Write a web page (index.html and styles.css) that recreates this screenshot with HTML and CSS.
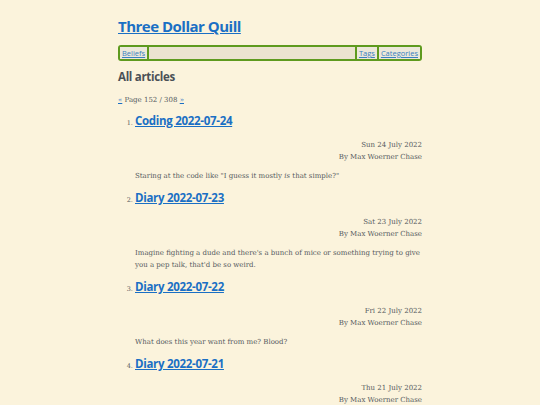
FILE: index.html
```html
<!DOCTYPE html>
<html>
<head>
<meta charset="utf-8">
<link rel="stylesheet" href="styles.css">
<title>Three Dollar Quill</title>
</head>
<body>
<div class="page">
  <h1 class="site-title"><a href="#">Three Dollar Quill</a></h1>
  <nav class="nav">
    <a class="nav-link nav-left" href="#">Beliefs</a>
    <span class="nav-fill"></span>
    <a class="nav-link nav-right" href="#">Tags</a>
    <a class="nav-link nav-right" href="#">Categories</a>
  </nav>
  <h2 class="section-title">All articles</h2>
  <p class="pager"><a href="#">«</a> Page 152 / 308 <a href="#">»</a></p>
  <ol class="articles">
    <li class="article">
      <h3 class="article-title"><a href="#">Coding 2022-07-24</a></h3>
      <div class="meta"><div>Sun 24 July 2022</div><div>By Max Woerner Chase</div></div>
      <p class="summary">Staring at the code like "I guess it mostly <em>is</em> that simple?"</p>
    </li>
    <li class="article">
      <h3 class="article-title"><a href="#">Diary 2022-07-23</a></h3>
      <div class="meta"><div>Sat 23 July 2022</div><div>By Max Woerner Chase</div></div>
      <p class="summary">Imagine fighting a dude and there's a bunch of mice or something trying to give you a pep talk, that'd be so weird.</p>
    </li>
    <li class="article">
      <h3 class="article-title"><a href="#">Diary 2022-07-22</a></h3>
      <div class="meta"><div>Fri 22 July 2022</div><div>By Max Woerner Chase</div></div>
      <p class="summary">What does this year want from me? Blood?</p>
    </li>
    <li class="article">
      <h3 class="article-title"><a href="#">Diary 2022-07-21</a></h3>
      <div class="meta"><div>Thu 21 July 2022</div><div>By Max Woerner Chase</div></div>
    </li>
  </ol>
</div>
</body>
</html>
```
FILE: styles.css
```css
html, body {
  margin: 0;
  padding: 0;
  background: #fbf3dc;
}
body {
  font-family: "DejaVu Serif", serif;
  color: #555a5e;
}
.page {
  width: 304px;
  margin: 0 auto;
  padding-top: 15px;
}
a {
  color: #1a6fc4;
}
.site-title {
  font-family: "Open Sans", sans-serif;
  font-weight: 700;
  font-size: 15px;
  letter-spacing: -0.5px;
  line-height: 22px;
  margin: 0 0 8px 0;
}
.nav {
  display: flex;
  height: 12px;
  border: 2px solid #5e9a1e;
  border-radius: 3px;
  background: #ebe3cf;
  font-family: "Open Sans", sans-serif;
  font-size: 7.5px;
  line-height: 12px;
}
.nav-link {
  padding: 0 2px;
  color: #3a7fc0;
  background: #ece8da;
}
.nav-left {
  border-right: 2px solid #5e9a1e;
}
.nav-right {
  border-left: 2px solid #5e9a1e;
}
.nav-fill {
  flex: 1;
}
.section-title {
  font-family: "Open Sans", sans-serif;
  font-weight: 700;
  font-size: 11.5px;
  letter-spacing: -0.3px;
  line-height: 16px;
  margin: 8px 0 0 0;
  color: #4a5056;
}
.pager {
  font-size: 7px;
  line-height: 10px;
  margin: 10px 0 0 0;
}
.articles {
  margin: 8px 0 0 0;
  padding-left: 17px;
}
.article {
  font-size: 6.5px;
}
.article-title {
  font-family: "Open Sans", sans-serif;
  font-weight: 700;
  font-size: 11.5px;
  letter-spacing: -0.3px;
  line-height: 16px;
  margin: 0;
}
.meta {
  text-align: right;
  font-size: 7px;
  line-height: 12px;
  margin-top: 10px;
}
.summary {
  font-size: 7px;
  line-height: 12px;
  margin: 7px 0 8px 0;
}
```
